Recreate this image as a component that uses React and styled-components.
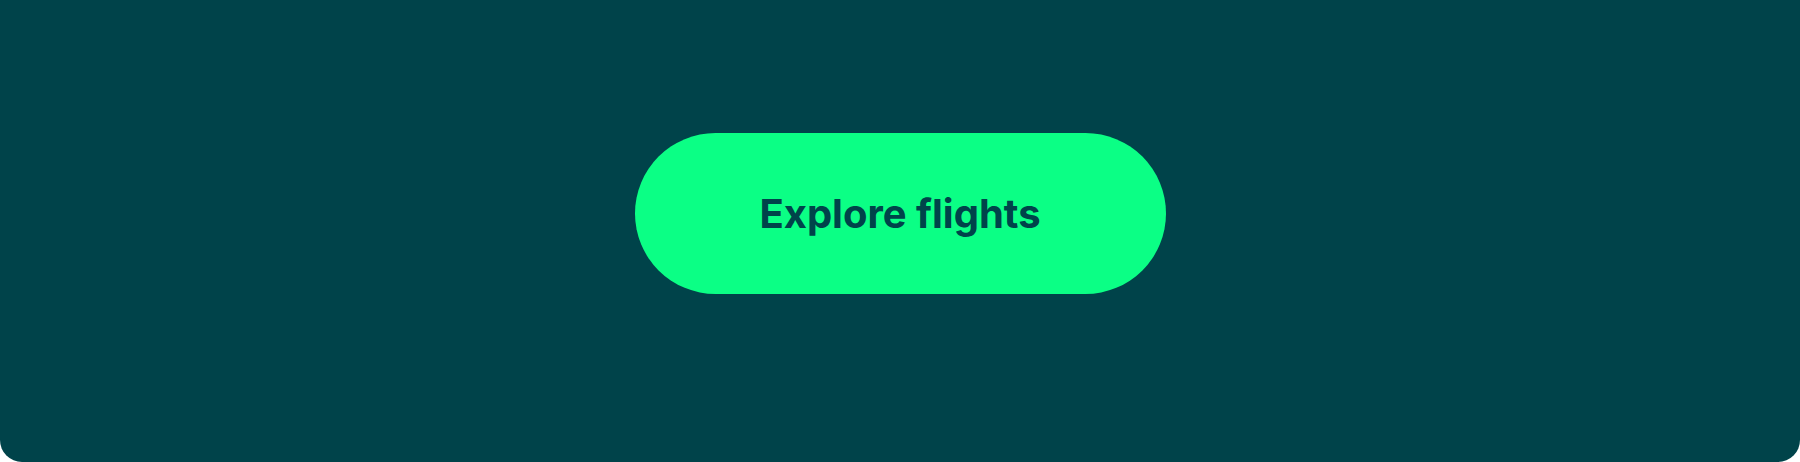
import styled, { createGlobalStyle } from "styled-components";

const GlobalStyle = createGlobalStyle`
  html, body {
    margin: 0;
    padding: 0;
    background: #ffffff;
  }
`;

const Panel = styled.div`
  box-sizing: border-box;
  width: 1800px;
  height: 462px;
  background: #00434a;
  border-radius: 0 0 22px 22px;
  display: flex;
  justify-content: center;
  align-items: flex-start;
  padding-top: 133px;
`;

const CtaButton = styled.button`
  box-sizing: border-box;
  width: 531px;
  height: 161px;
  border: none;
  border-radius: 999px;
  background: #0bff85;
  color: #00434a;
  font-family: Inter, "Noto Sans", sans-serif;
  font-weight: 700;
  font-size: 40px;
  display: flex;
  align-items: center;
  justify-content: center;
  cursor: pointer;
`;

const App = () => {
  return (
    <>
      <GlobalStyle />
      <Panel>
        <CtaButton>Explore flights</CtaButton>
      </Panel>
    </>
  );
};

export default App;
